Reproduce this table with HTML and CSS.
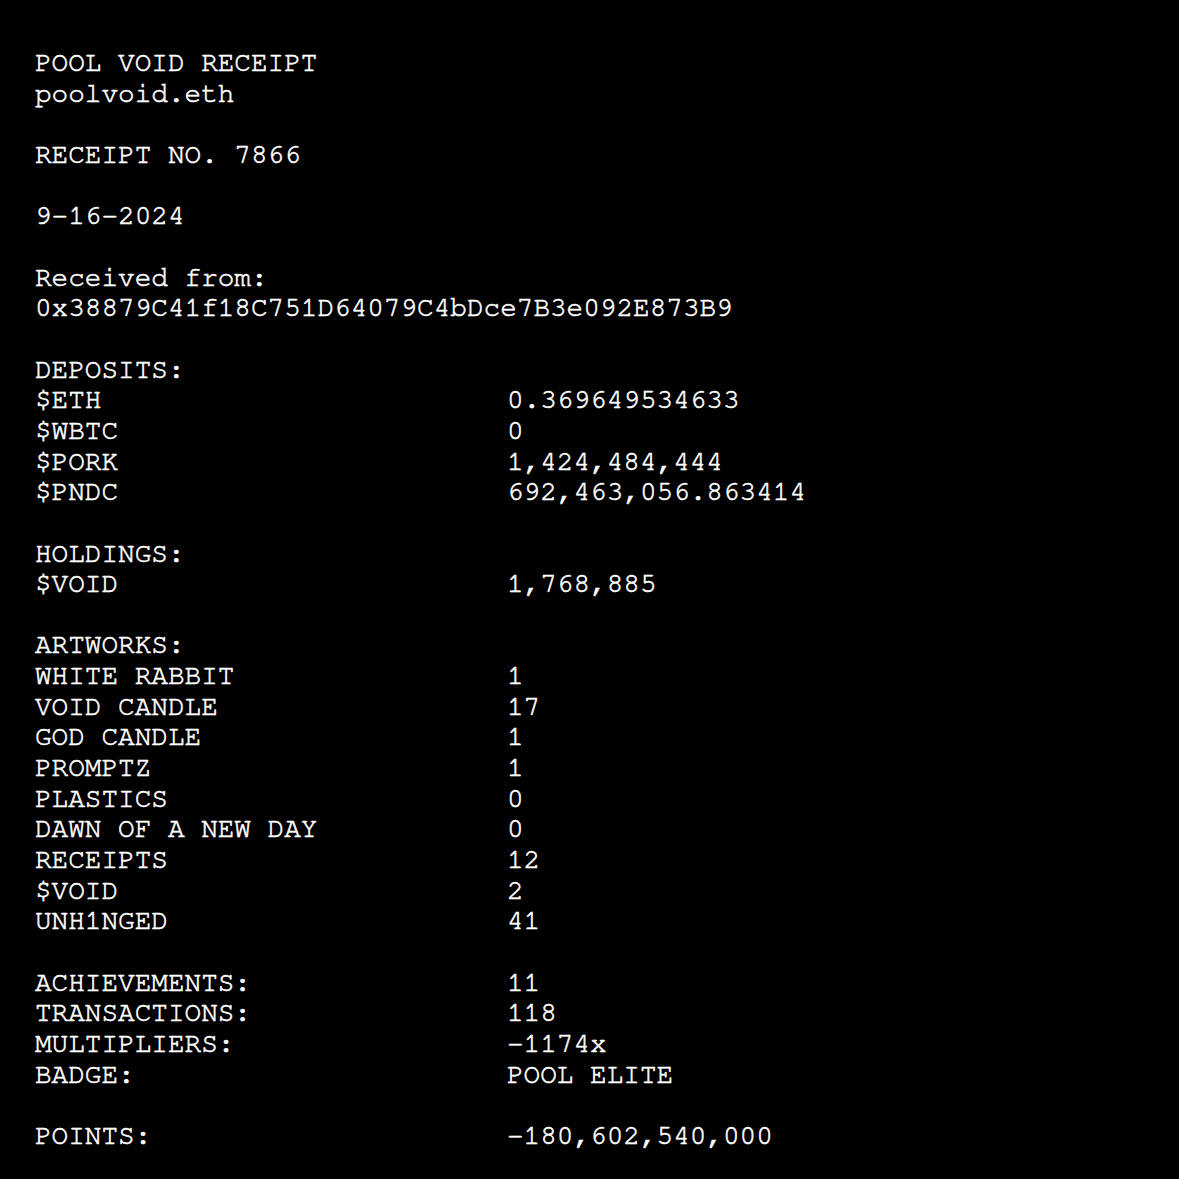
FILE: index.html
```html
<!DOCTYPE html>
<html>
<head>
<meta charset="utf-8">
<link rel="stylesheet" href="styles.css">
</head>
<body>
<main class="receipt">
  <section class="block">
    <div class="line">POOL VOID RECEIPT</div>
    <div class="line">poolvoid.eth</div>
  </section>
  <section class="block">
    <div class="line">RECEIPT NO. 7866</div>
  </section>
  <section class="block">
    <div class="line">9-16-2024</div>
  </section>
  <section class="block">
    <div class="line">Received from:</div>
    <div class="line">0x38879C41f18C751D64079C4bDce7B3e092E873B9</div>
  </section>
  <section class="block">
    <div class="line">DEPOSITS:</div>
    <div class="row"><span>$ETH</span><span>0.369649534633</span></div>
    <div class="row"><span>$WBTC</span><span>0</span></div>
    <div class="row"><span>$PORK</span><span>1,424,484,444</span></div>
    <div class="row"><span>$PNDC</span><span>692,463,056.863414</span></div>
  </section>
  <section class="block">
    <div class="line">HOLDINGS:</div>
    <div class="row"><span>$VOID</span><span>1,768,885</span></div>
  </section>
  <section class="block">
    <div class="line">ARTWORKS:</div>
    <div class="row"><span>WHITE RABBIT</span><span>1</span></div>
    <div class="row"><span>VOID CANDLE</span><span>17</span></div>
    <div class="row"><span>GOD CANDLE</span><span>1</span></div>
    <div class="row"><span>PROMPTZ</span><span>1</span></div>
    <div class="row"><span>PLASTICS</span><span>0</span></div>
    <div class="row"><span>DAWN OF A NEW DAY</span><span>0</span></div>
    <div class="row"><span>RECEIPTS</span><span>12</span></div>
    <div class="row"><span>$VOID</span><span>2</span></div>
    <div class="row"><span>UNH1NGED</span><span>41</span></div>
  </section>
  <section class="block">
    <div class="row"><span>ACHIEVEMENTS:</span><span>11</span></div>
    <div class="row"><span>TRANSACTIONS:</span><span>118</span></div>
    <div class="row"><span>MULTIPLIERS:</span><span>-1174x</span></div>
    <div class="row"><span>BADGE:</span><span>POOL ELITE</span></div>
  </section>
  <section class="block">
    <div class="row"><span>POINTS:</span><span>-180,602,540,000</span></div>
  </section>
</main>
</body>
</html>
```
FILE: styles.css
```css
html, body {
  margin: 0;
  padding: 0;
  background: #000;
}
body {
  width: 1179px;
  height: 1179px;
  overflow: hidden;
}
.receipt {
  padding: 48px 0 0 35px;
  color: #fff;
  font-family: "Nimbus Mono PS", "Nimbus Mono L", "FreeMono", "Courier", "Liberation Mono", monospace;
  font-size: 27.7px;
  line-height: 30.66px;
  -webkit-text-stroke: 0.6px #fff;
}
.block {
  margin-bottom: 30.66px;
}
.line {
  white-space: pre;
}
.row {
  display: grid;
  grid-template-columns: 472px 1fr;
  white-space: pre;
}
```
